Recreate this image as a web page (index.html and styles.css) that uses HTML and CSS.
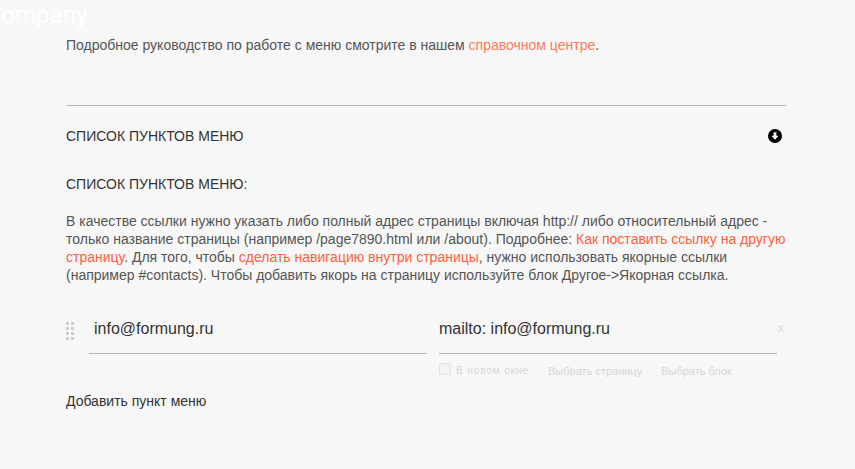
FILE: index.html
```html
<!DOCTYPE html>
<html lang="ru">
<head>
<meta charset="utf-8">
<title>Меню</title>
<link rel="stylesheet" href="styles.css">
</head>
<body>
<div class="brand">Company</div>
<main class="panel">
  <p class="guide">Подробное руководство по работе с меню смотрите в нашем <a href="#">справочном центре</a>.</p>
  <div class="section-head">
    <span>СПИСОК ПУНКТОВ МЕНЮ</span>
    <svg class="toggle" viewBox="0 0 14 14" width="14" height="14" aria-hidden="true">
      <circle cx="7" cy="7" r="7" fill="#000"/>
      <path d="M5.600 3.200h2.800v3.600h2.200L7 10.800 3.400 6.800h2.200z" fill="#f7f7f7"/>
    </svg>
  </div>
  <h2 class="list-title">СПИСОК ПУНКТОВ МЕНЮ:</h2>
  <p class="help">В качестве ссылки нужно указать либо полный адрес страницы включая http:// либо относительный адрес - только название страницы (например /page7890.html или /about). Подробнее: <a href="#">Как поставить ссылку на другую страницу</a>. Для того, чтобы <a href="#">сделать навигацию внутри страницы</a>, нужно использовать якорные ссылки (например #contacts). Чтобы добавить якорь на страницу используйте блок Другое-&gt;Якорная ссылка.</p>
  <div class="item">
    <div class="grip"><i></i><i></i><i></i><i></i><i></i><i></i><i></i><i></i></div>
    <div class="field field-title">info@formung.ru</div>
    <div class="link-col">
      <div class="field">mailto: info@formung.ru</div>
      <div class="options">
        <label class="check"><span class="box"></span>В новом окне</label>
        <span>Выбрать страницу</span>
        <span>Выбрать блок</span>
      </div>
    </div>
    <div class="remove">x</div>
  </div>
  <div class="add">Добавить пункт меню</div>
</main>
</body>
</html>
```
FILE: styles.css
```css
html, body {
  margin: 0;
  height: 469px;
  overflow: hidden;
}
body {
  position: relative;
  background: #f7f7f7;
  font-family: "Liberation Sans", Arial, sans-serif;
  color: #555;
}
.brand {
  position: absolute;
  left: -14px;
  top: -3px;
  font-family: Roboto, sans-serif;
  font-size: 24px;
  line-height: 36px;
  color: #fff;
}
.panel {
  width: 720px;
  padding: 38px 0 0 66px;
}
.guide {
  margin: 0;
  height: 67px;
  font-size: 14px;
  line-height: 15px;
  border-bottom: 1px solid #b5b5b5;
}
a {
  color: #ff7a5c;
  text-decoration: none;
}
.section-head {
  display: flex;
  justify-content: space-between;
  align-items: center;
  height: 60px;
  padding-right: 4px;
  font-size: 14px;
  color: #333;
}
.list-title {
  margin: 10px 0 0;
  font-size: 14px;
  font-weight: 400;
  line-height: 16px;
  color: #333;
}
.help {
  margin: 20px 0 0;
  font-size: 14px;
  line-height: 18px;
}
.help a {
  color: #ff5f3c;
}
.item {
  display: flex;
  margin-top: 26px;
  position: relative;
}
.grip {
  display: grid;
  grid-template-columns: 3px 3px;
  grid-auto-rows: 3px;
  gap: 2px;
  align-content: start;
  width: 23px;
  padding-top: 12px;
}
.grip i {
  background: #ccc;
}
.field {
  height: 43px;
  padding-left: 5px;
  border-bottom: 1px solid #b5b5b5;
  font-size: 16px;
  line-height: 38px;
  color: #333;
}
.field-title {
  width: 333px;
}
.link-col {
  width: 338px;
  margin-left: 12px;
}
.link-col .field {
  padding-left: 0;
}
.options {
  display: flex;
  gap: 19px;
  margin-top: 8px;
  font-size: 11px;
  line-height: 18px;
  color: #d6d6d6;
}
.check {
  display: flex;
  align-items: center;
  font-size: 10px;
  letter-spacing: 0.92px;
}
.box {
  width: 10px;
  height: 10px;
  margin: -4px 5px 0 0;
  border: 1px solid #e4e4e4;
  border-radius: 2px;
  background: #f2f2f2;
}
.remove {
  margin-left: 1px;
  font-size: 12px;
  line-height: 36px;
  color: #d8d8d8;
}
.add {
  margin-top: 13px;
  font-size: 14px;
  line-height: 16px;
  color: #333;
}
```
